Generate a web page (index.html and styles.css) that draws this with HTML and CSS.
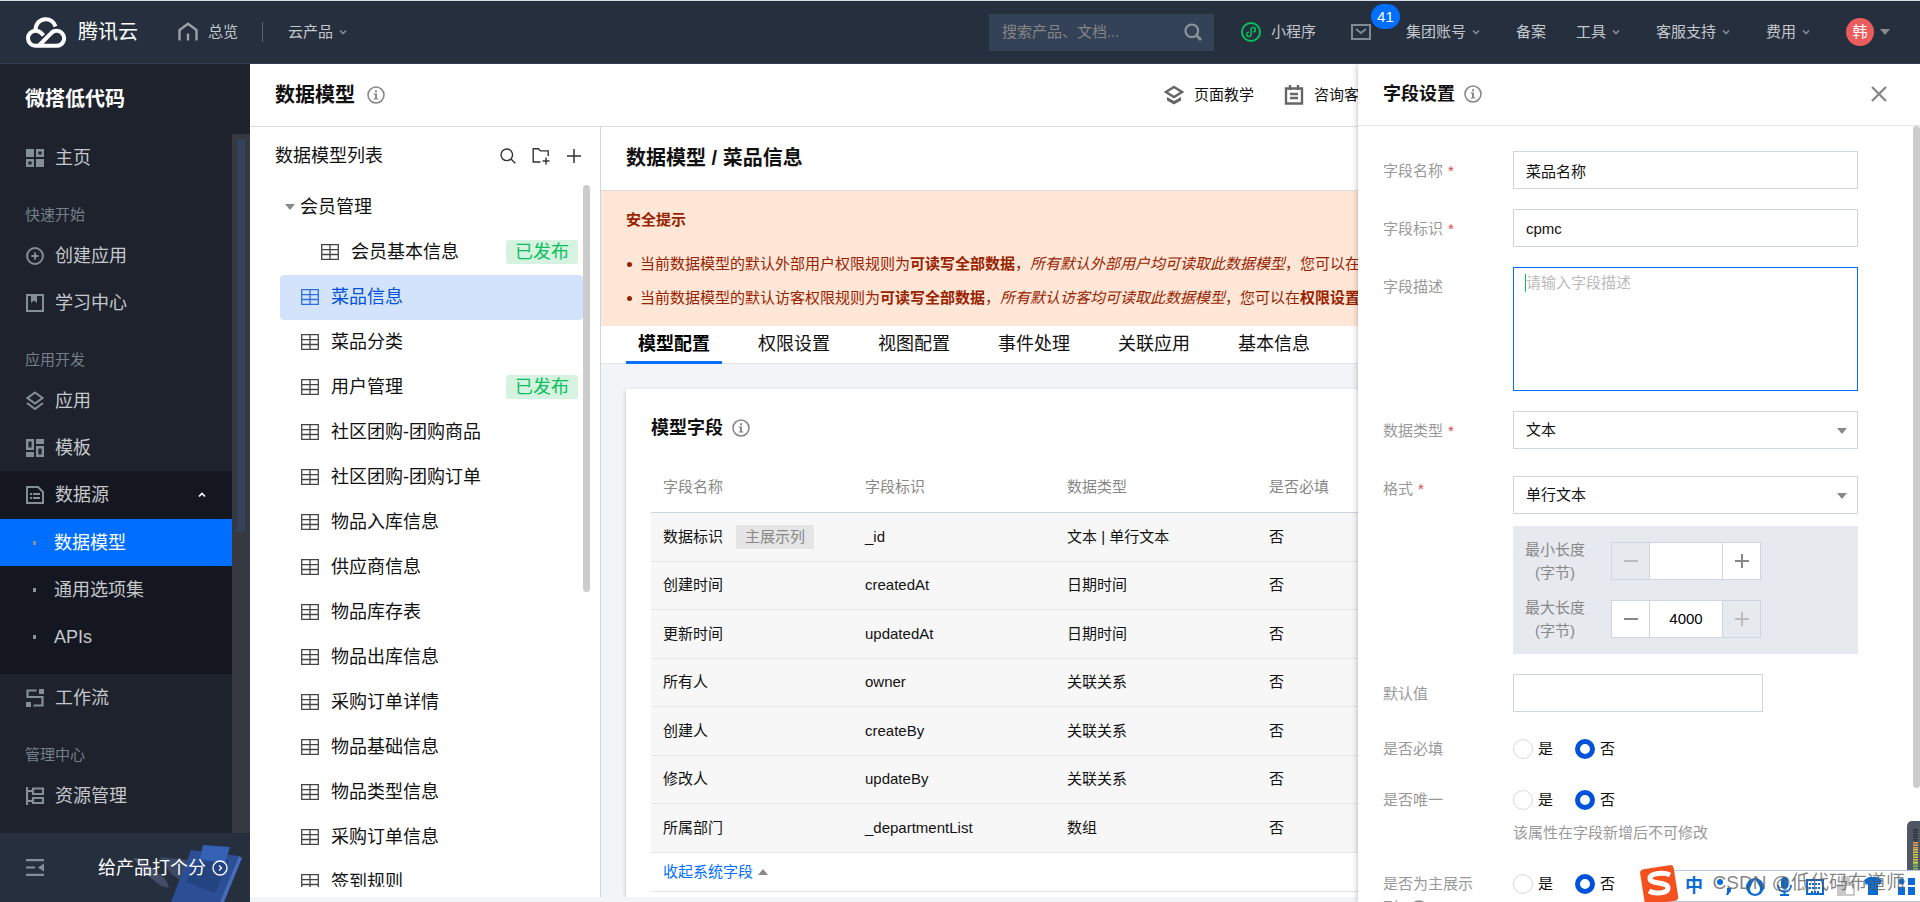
FILE: index.html
```html
<!DOCTYPE html>
<html lang="zh-CN">
<head>
<meta charset="utf-8">
<title>数据模型 - 微搭低代码</title>
<link rel="stylesheet" href="styles.css">
</head>
<body>
<svg class="sprite" aria-hidden="true">
  <symbol id="i-info" viewBox="0 0 18 18"><circle cx="9" cy="9" r="8" fill="none" stroke="currentColor" stroke-width="1.6"/><path d="M8 4.3h2v2H8zM6.8 7.6H10v4.8h1.4v1.2H6.6v-1.2H8V8.8H6.8z" fill="currentColor"/></symbol>
  <symbol id="i-chev" viewBox="0 0 10 10"><path d="M2 3.5 5 6.500 8 3.500" fill="none" stroke="currentColor" stroke-width="1.700"/></symbol>
  <symbol id="i-tri" viewBox="0 0 10 10"><path d="M0 2h10L5 8z" fill="currentColor"/></symbol>
  <symbol id="i-grid" viewBox="0 0 18 16"><path d="M.7.7h16.600v14.600H.7zM9 .7v14.600M.7 5.600h16.600M.7 10.500h16.600" fill="none" stroke="currentColor" stroke-width="1.300"/></symbol>
  <symbol id="i-home" viewBox="0 0 20 20"><path d="M1.500 18.500V8L10 1.800 18.500 8v10.500M10 11.500v7" fill="none" stroke="currentColor" stroke-width="2.400"/></symbol>
  <symbol id="i-search" viewBox="0 0 18 18"><circle cx="7.800" cy="7.800" r="6.300" fill="none" stroke="currentColor" stroke-width="2.200"/><path d="m12.500 12.500 4.500 4.500" stroke="currentColor" stroke-width="3"/></symbol>
  <symbol id="i-find" viewBox="0 0 16 16"><circle cx="6.800" cy="6.800" r="5.800" fill="none" stroke="currentColor" stroke-width="1.400"/><path d="m11 11 4.300 4.300" stroke="currentColor" stroke-width="1.400"/></symbol>
  <symbol id="i-folder" viewBox="0 0 18 18"><path d="M8.500 15H1.200V1.700h5.300l2 2.200h7.700v5M14 10.500v7M10.500 14h7" fill="none" stroke="currentColor" stroke-width="1.400"/></symbol>
  <symbol id="i-plus" viewBox="0 0 16 16"><path d="M8 1v14M1 8h14" stroke="currentColor" stroke-width="1.500"/></symbol>
  <symbol id="i-layers" viewBox="0 0 18 20"><path d="M9 1.500 16.500 7 9 12.500 1.500 7z" fill="none" stroke="currentColor" stroke-width="2"/><path d="m1 12 8 6 8-6" fill="none" stroke="currentColor" stroke-width="2"/></symbol>
  <symbol id="i-teach" viewBox="0 0 20 20"><path d="M10 2 18 7 10 12 2 7z" fill="none" stroke="currentColor" stroke-width="2.400"/><path d="m3 12 7 4 7-4v3.500l-7 4-7-4z" fill="currentColor"/></symbol>
  <symbol id="i-note" viewBox="0 0 20 20"><path d="M2 3.500h16v15H2zM6 0v5M14 0v5M6 9h8M6 13h8" fill="none" stroke="currentColor" stroke-width="2.400"/></symbol>
</svg>

<header class="topbar">
  <a class="brand" href="#">
    <svg width="42" height="31" viewBox="0 0 42 31" fill="none" stroke="#fff" stroke-width="4"><path d="M18.500 18.500C16.500 16 14 13.800 10.500 13.800a7.500 7.500 0 0 0 0 15H32a7.500 7.500 0 1 0-6-12.500L14.500 28"/><path d="M10.500 13.500C10.500 7 14.500 2.200 20.500 2.200c5 0 8.500 2.800 10 7.300"/></svg>
    <span>腾讯云</span>
  </a>
  <a class="nav-link overview" href="#"><svg class="dim" width="20" height="20"><use href="#i-home"/></svg>总览</a>
  <span class="divider"></span>
  <a class="nav-link products" href="#">云产品<svg class="chev" width="10" height="10"><use href="#i-chev"/></svg></a>
  <div class="top-right">
    <div class="search">
      <input type="text" placeholder="搜索产品、文档..." aria-label="搜索产品、文档">
      <button type="button" aria-label="搜索"><svg width="18" height="18"><use href="#i-search"/></svg></button>
    </div>
    <a class="nav-link mini" href="#"><svg width="20" height="20" viewBox="0 0 20 20" fill="none" stroke="#0abf5b"><circle cx="10" cy="10" r="9" stroke-width="2"/><path d="M7.800 10.200a2.200 2.200 0 1 0 2.200 2.300V7.500a2.200 2.200 0 1 1 2.200 2.300" stroke-width="1.500"/></svg>小程序</a>
    <a class="mail" href="#" aria-label="消息"><svg width="20" height="16" viewBox="0 0 20 16" fill="none" stroke="#7f8a92" stroke-width="2"><path d="M1 1h18v14H1zM5 5l5 4 5-4"/></svg><span class="badge">41</span></a>
    <a class="nav-link" href="#">集团账号<svg class="chev" width="10" height="10"><use href="#i-chev"/></svg></a>
    <a class="nav-link plain" href="#">备案</a>
    <a class="nav-link" href="#">工具<svg class="chev" width="10" height="10"><use href="#i-chev"/></svg></a>
    <a class="nav-link" href="#">客服支持<svg class="chev" width="10" height="10"><use href="#i-chev"/></svg></a>
    <a class="nav-link" href="#">费用<svg class="chev" width="10" height="10"><use href="#i-chev"/></svg></a>
    <button class="user" type="button"><span class="avatar">韩</span><svg width="10" height="10"><use href="#i-tri"/></svg></button>
  </div>
</header>

<div class="body">
  <aside class="sidebar">
    <h2 class="side-title">微搭低代码</h2>
    <div class="side-scroll">
      <nav class="side-nav">
        <a class="side-item" href="#"><svg width="18" height="18" viewBox="0 0 18 18" fill="currentColor"><path d="M0 0h8v8H0zM10 10h8v8h-8z"/><path d="M11.200 1.200h5.600v5.600h-5.600zM1.200 11.200h5.600v5.600H1.200z" fill="none" stroke="currentColor" stroke-width="2.400"/></svg>主页</a>
        <div class="side-head">快速开始</div>
        <a class="side-item" href="#"><svg width="20" height="20" viewBox="0 0 20 20" fill="none" stroke="currentColor" stroke-width="2.200"><circle cx="10" cy="10" r="8.800"/><path d="M10 6v8M6 10h8"/></svg>创建应用</a>
        <a class="side-item" href="#"><svg width="18" height="18" viewBox="0 0 18 18"><path d="M1 1h16v16H1z" fill="none" stroke="currentColor" stroke-width="2"/><path d="M5 2h6v7L8 6.500 5 9z" fill="currentColor"/></svg>学习中心</a>
        <div class="side-head">应用开发</div>
        <a class="side-item" href="#"><svg width="18" height="20"><use href="#i-layers"/></svg>应用</a>
        <a class="side-item" href="#"><svg width="18" height="18" viewBox="0 0 18 18" fill="currentColor"><path d="M10 0h8v5h-8zM0 13h8v5H0z"/><path d="M1.200 1.200h5.600v8.600H1.200zM11.200 8.200h5.600v8.600h-5.600z" fill="none" stroke="currentColor" stroke-width="2.400"/></svg>模板</a>
        <div class="side-group">
          <a class="side-item group-head" href="#"><svg width="18" height="18" viewBox="0 0 18 18"><path d="M1 1h11l5 5v11H1z" fill="none" stroke="currentColor" stroke-width="2"/><path d="M4 7h2v2H4zM7 7h7v2H7zM4 11h2v2H4zM7 11h7v2H7z" fill="currentColor"/></svg>数据源<svg class="up" width="10" height="10"><use href="#i-chev"/></svg></a>
          <a class="sub-item active" href="#">数据模型</a>
          <a class="sub-item" href="#">通用选项集</a>
          <a class="sub-item" href="#">APIs</a>
        </div>
        <a class="side-item" href="#"><svg width="18" height="18" viewBox="0 0 18 18" fill="currentColor"><path d="M13 0h5v5h-5zM0 13h5v5H0z"/><path d="M10.500 1.500h-9v6.500H16.500v8.500h-9" fill="none" stroke="currentColor" stroke-width="2.200"/></svg>工作流</a>
        <div class="side-head">管理中心</div>
        <a class="side-item" href="#"><svg width="18" height="18" viewBox="0 0 18 18" fill="none" stroke="currentColor" stroke-width="2.200"><path d="M1 0v18M1 4h6M1 14h6M7 1.500h10v5.500H7zM7 11h10v5H7z"/></svg>资源管理</a>
        <a class="side-item" href="#" aria-label="更多"><svg width="20" height="18" viewBox="0 0 20 18" fill="none" stroke="currentColor" stroke-width="2"><path d="M0 1h20M1 1v16h18V1"/></svg></a>
      </nav>
      <div class="side-track"><div class="side-thumb"></div></div>
    </div>
    <div class="side-foot">
      <svg class="board" width="110" height="58" viewBox="0 0 110 58"><path d="M0 14h6l12 9 15 13 3 8-8-2-14-11z" fill="#434e66"/><path d="m27 13 28 3-8 20-9-6z" fill="#3b4967"/><path d="M58 6 106 12 88 58H38z" fill="#2b4e94"/><path d="m106 12 3 2-18 44h-4z" fill="#446dba"/><path d="M60 20 96 15 82 49 54 38z" fill="#234381"/><path d="m70 1 27 2-5 16-25-4z" fill="#3561b4"/></svg>
      <button type="button" aria-label="收起菜单"><svg width="18" height="17" viewBox="0 0 18 17" fill="currentColor"><path d="M0 0h18v2.200H0zM0 7.400h9v2.200H0zM0 14.800h18V17H0zM18 4.500v8l-6-4z"/></svg></button>
      <a class="rate" href="#">给产品打个分<svg width="16" height="16" viewBox="0 0 16 16" fill="none" stroke="#fff" stroke-width="1.300"><circle cx="8" cy="8" r="7"/><path d="m7 5.500 2.500 2.500L7 10.500"/></svg></a>
    </div>
  </aside>

  <main class="main">
    <div class="page-head">
      <h1>数据模型</h1>
      <svg class="info" width="18" height="18"><use href="#i-info"/></svg>
      <div class="page-links">
        <a href="#"><svg width="20" height="20"><use href="#i-teach"/></svg>页面教学</a>
        <a href="#"><svg width="20" height="20"><use href="#i-note"/></svg>咨询客服</a>
      </div>
    </div>
    <div class="columns">
      <section class="models">
        <div class="models-head">
          <h3>数据模型列表</h3>
          <button type="button" aria-label="搜索"><svg width="16" height="16"><use href="#i-find"/></svg></button>
          <button type="button" aria-label="新建文件夹"><svg width="18" height="18"><use href="#i-folder"/></svg></button>
          <button type="button" aria-label="新建"><svg width="16" height="16"><use href="#i-plus"/></svg></button>
        </div>
        <div class="tree-wrap">
          <ul class="tree">
            <li class="folder"><svg class="tri" width="10" height="10"><use href="#i-tri"/></svg>会员管理</li>
            <li class="child"><svg width="18" height="16"><use href="#i-grid"/></svg>会员基本信息<span class="tag">已发布</span></li>
            <li class="selected"><svg width="18" height="16"><use href="#i-grid"/></svg>菜品信息</li>
            <li><svg width="18" height="16"><use href="#i-grid"/></svg>菜品分类</li>
            <li><svg width="18" height="16"><use href="#i-grid"/></svg>用户管理<span class="tag">已发布</span></li>
            <li><svg width="18" height="16"><use href="#i-grid"/></svg>社区团购-团购商品</li>
            <li><svg width="18" height="16"><use href="#i-grid"/></svg>社区团购-团购订单</li>
            <li><svg width="18" height="16"><use href="#i-grid"/></svg>物品入库信息</li>
            <li><svg width="18" height="16"><use href="#i-grid"/></svg>供应商信息</li>
            <li><svg width="18" height="16"><use href="#i-grid"/></svg>物品库存表</li>
            <li><svg width="18" height="16"><use href="#i-grid"/></svg>物品出库信息</li>
            <li><svg width="18" height="16"><use href="#i-grid"/></svg>采购订单详情</li>
            <li><svg width="18" height="16"><use href="#i-grid"/></svg>物品基础信息</li>
            <li><svg width="18" height="16"><use href="#i-grid"/></svg>物品类型信息</li>
            <li><svg width="18" height="16"><use href="#i-grid"/></svg>采购订单信息</li>
            <li><svg width="18" height="16"><use href="#i-grid"/></svg>签到规则</li>
          </ul>
          <div class="tree-thumb"></div>
        </div>
      </section>

      <section class="detail">
        <h2 class="crumb">数据模型 / 菜品信息</h2>
        <div class="alert">
          <strong>安全提示</strong>
          <ul>
            <li>当前数据模型的默认外部用户权限规则为<b>可读写全部数据</b>，<i>所有默认外部用户均可读取此数据模型</i>，您可以在</li>
            <li>当前数据模型的默认访客权限规则为<b>可读写全部数据</b>，<i>所有默认访客均可读取此数据模型</i>，您可以在<b>权限设置</b></li>
          </ul>
        </div>
        <div class="tabs" role="tablist">
          <button type="button" role="tab" class="on">模型配置</button>
          <button type="button" role="tab">权限设置</button>
          <button type="button" role="tab">视图配置</button>
          <button type="button" role="tab">事件处理</button>
          <button type="button" role="tab">关联应用</button>
          <button type="button" role="tab">基本信息</button>
        </div>
        <div class="card">
          <div class="card-head"><h3>模型字段</h3><svg class="info" width="18" height="18"><use href="#i-info"/></svg></div>
          <table>
            <colgroup><col class="c"><col class="c"><col class="c"><col></colgroup>
            <thead><tr><th>字段名称</th><th>字段标识</th><th>数据类型</th><th>是否必填</th></tr></thead>
            <tbody>
              <tr><td>数据标识<span class="chip">主展示列</span></td><td>_id</td><td>文本 | 单行文本</td><td>否</td></tr>
              <tr><td>创建时间</td><td>createdAt</td><td>日期时间</td><td>否</td></tr>
              <tr><td>更新时间</td><td>updatedAt</td><td>日期时间</td><td>否</td></tr>
              <tr><td>所有人</td><td>owner</td><td>关联关系</td><td>否</td></tr>
              <tr><td>创建人</td><td>createBy</td><td>关联关系</td><td>否</td></tr>
              <tr><td>修改人</td><td>updateBy</td><td>关联关系</td><td>否</td></tr>
              <tr><td>所属部门</td><td>_departmentList</td><td>数组</td><td>否</td></tr>
            </tbody>
          </table>
          <div class="fold"><a href="#">收起系统字段<svg width="10" height="10"><use href="#i-tri"/></svg></a></div>
        </div>
      </section>
    </div>
  </main>

  <aside class="drawer">
    <div class="drawer-head">
      <h2>字段设置</h2>
      <svg class="info" width="18" height="18"><use href="#i-info"/></svg>
      <button type="button" aria-label="关闭"><svg width="16" height="16" viewBox="0 0 16 16" fill="none" stroke="currentColor" stroke-width="2.400"><path d="m1 1 14 14M15 1 1 15"/></svg></button>
    </div>
    <form class="form">
      <div class="row"><label for="f-name">字段名称<em>*</em></label><input id="f-name" class="field" type="text" value="菜品名称"></div>
      <div class="row"><label for="f-id">字段标识<em>*</em></label><input id="f-id" class="field" type="text" value="cpmc"></div>
      <div class="row"><label for="f-desc">字段描述</label><div class="area"><textarea id="f-desc" class="field" placeholder="请输入字段描述"></textarea><span class="caret"></span></div></div>
      <div class="row roomy"><label for="f-type">数据类型<em>*</em></label><div class="select"><select id="f-type" class="field"><option>文本</option></select><svg width="10" height="10"><use href="#i-tri"/></svg></div></div>
      <div class="row top"><label for="f-fmt">格式<em>*</em></label>
        <div class="stack">
          <div class="select"><select id="f-fmt" class="field"><option>单行文本</option></select><svg width="10" height="10"><use href="#i-tri"/></svg></div>
          <div class="limits">
            <div class="limit"><label for="f-min">最小长度<br>(字节)</label><div class="stepper"><button type="button" disabled aria-label="减少"><svg width="14" height="14" viewBox="0 0 14 14"><path d="M0 6h14v2H0z" fill="currentColor"/></svg></button><input id="f-min" type="text"><button type="button" aria-label="增加"><svg width="14" height="14" viewBox="0 0 14 14"><path d="M0 6h14v2H0zM6 0h2v14H6z" fill="currentColor"/></svg></button></div></div>
            <div class="limit"><label for="f-max">最大长度<br>(字节)</label><div class="stepper"><button type="button" aria-label="减少"><svg width="14" height="14" viewBox="0 0 14 14"><path d="M0 6h14v2H0z" fill="currentColor"/></svg></button><input id="f-max" type="text" value="4000"><button type="button" disabled aria-label="增加"><svg width="14" height="14" viewBox="0 0 14 14"><path d="M0 6h14v2H0zM6 0h2v14H6z" fill="currentColor"/></svg></button></div></div>
          </div>
        </div>
      </div>
      <div class="row"><label for="f-def">默认值</label><input id="f-def" class="field short" type="text"></div>
      <div class="row choice"><span class="lbl">是否必填</span><label><input type="radio" name="req">是</label><label><input type="radio" name="req" checked>否</label></div>
      <div class="row choice"><span class="lbl">是否唯一</span><label><input type="radio" name="uniq">是</label><label><input type="radio" name="uniq" checked>否</label></div>
      <p class="hint">该属性在字段新增后不可修改</p>
      <div class="row choice"><span class="lbl">是否为主展示<br>列<svg class="info" width="18" height="18"><use href="#i-info"/></svg></span><label><input type="radio" name="main">是</label><label><input type="radio" name="main" checked>否</label></div>
    </form>
    <div class="drawer-thumb"></div>
  </aside>
</div>

<svg class="meter" width="13" height="49" viewBox="0 0 13 49"><path d="M13 0H5a5 5 0 0 0-5 5v44h13z" fill="#525766"/><g stroke-width="5" stroke-dasharray="1.500 1"><path d="M8.500 8v14" stroke="#2e323d"/><path d="M8.500 21v7" stroke="#e6a24c"/><path d="M8.500 28v14" stroke="#d9c948"/><path d="M8.500 42v7" stroke="#7fc45c"/></g></svg>
<div class="ime">
  <span class="cn">中</span>
  <svg width="222" height="20" viewBox="0 0 222 20" fill="#0a6bd6"><circle cx="25" cy="6" r="3"/><path d="M32 12h4v3l-3 4h-2l1-3z"/><circle cx="60" cy="11" r="9"/><path d="M60 3c4 6 5 8 5 10a5 5 0 0 1-10 0c0-2 1-4 5-10z" fill="#fff"/><rect x="86" y="1" width="7" height="12" rx="3.500"/><path d="M83 9c0 9 13 9 13 0M89.500 15v5M85 19h9" fill="none" stroke="#0a6bd6" stroke-width="2"/><path d="M112 4h16v14h-16z" fill="none" stroke="#0a6bd6" stroke-width="2"/><path d="M114 8h12M114 12h12M116 16h8" stroke="#0a6bd6" stroke-width="2" stroke-dasharray="2 1"/><path d="M142 8h18v12h-18zM146 0h9v8h-9z" fill="#c9c9c9"/><path d="M151 10h7v8h-7z" fill="#fff"/><path d="m169 4 5-3h8l5 3-2 5-2-1v11h-10V8l-2 1z"/><path d="M203 11h7v8h-7zM213 11h7v8h-7zM213 2h7v7h-7z"/><circle cx="206.500" cy="5.500" r="3"/></svg>
</div>
<svg class="sogou" width="40" height="40" viewBox="0 0 40 40"><rect x="3" y="3" width="34" height="36" rx="4" fill="#f4511e" transform="rotate(-9 20 20)"/><path d="M31 11c-6-3-20-2-20 3.500 0 6 18 3 18 9.500 0 6-14 6-19 3" fill="none" stroke="#fff" stroke-width="5"/></svg>
<div class="watermark">CSDN @低代码布道师</div>
</body>
</html>
```
FILE: styles.css
```css
* { box-sizing: border-box; }
html, body { height: 100%; }
body {
  margin: 0;
  display: flex;
  flex-direction: column;
  overflow: hidden;
  position: relative;
  font: 15px/24px "Liberation Sans", "Noto Sans CJK SC", sans-serif;
  color: #111;
  background: #f3f4f7;
}
h1, h2, h3, p, ul { margin: 0; padding: 0; }
ul { list-style: none; }
a { color: inherit; text-decoration: none; }
button, input, select, textarea { font: inherit; color: inherit; margin: 0; }
button { background: none; border: 0; padding: 0; display: flex; align-items: center; justify-content: center; }
svg { flex: none; display: block; }
.sprite { position: absolute; width: 0; height: 0; }
.info { color: #888; }

/* Top bar */
.topbar {
  flex: none;
  height: 64px;
  display: flex;
  align-items: center;
  padding: 0 30px 0 25px;
  background: #262f3e;
  border-top: 1px solid #d5dce0;
  border-bottom: 1px solid #333f56;
  color: #c4c8cc;
}
.brand { display: flex; align-items: center; gap: 11px; color: #fff; font-size: 20px; }
.nav-link { display: flex; align-items: center; gap: 5px; white-space: nowrap; }
.overview { margin-left: 40px; gap: 10px; }
.dim { color: #9aa2a8; }
.chev { color: #7f8a92; }
.divider { width: 1px; height: 20px; margin: 0 25px 0 24px; background: #5b646f; }
.top-right { margin-left: auto; display: flex; align-items: center; gap: 35px; }
.search { display: flex; align-items: center; width: 225px; height: 37px; padding: 0 12px 0 13px; margin-right: -8px; background: #344258; }
.search input { flex: 1; min-width: 0; padding: 0; border: 0; outline: 0; background: none; }
.search input::placeholder { color: #858585; opacity: 1; }
.search button { color: #8a949b; }
.mini { gap: 10px; }
.plain { margin-right: -5px; }
.mail { position: relative; }
.badge { position: absolute; left: 20px; top: -20px; width: 29px; height: 25px; border-radius: 13px; background: #006eff; color: #fff; text-align: center; line-height: 25px; }
.user { gap: 6px; color: #8a8a8a; }
.avatar { width: 28px; height: 28px; border-radius: 50%; background: #eb5c5c; color: #fff; line-height: 27px; text-align: center; }

.body { flex: 1; min-height: 0; display: flex; position: relative; }

/* Sidebar */
.sidebar { flex: none; width: 250px; display: flex; flex-direction: column; background: #1e222d; color: #c5c8cc; }
.side-title { flex: none; height: 70px; padding-left: 25px; color: #fff; font-size: 20px; line-height: 70px; }
.side-scroll { flex: 1; min-height: 0; display: flex; overflow: hidden; }
.side-nav { flex: 1; font-size: 18px; }
.side-item { display: flex; align-items: center; height: 47px; padding-left: 26px; }
.side-item svg { color: #858f97; width: 18px; margin-right: 11px; }
.side-head { height: 51px; padding: 17px 0 0 25px; color: #75808a; font-size: 15px; line-height: 34px; }
.side-group { padding-bottom: 14px; background: #151720; }
.group-head { height: 48px; }
.side-item .up { width: 10px; margin: 0 25px 0 auto; color: #fff; transform: rotate(180deg); }
.sub-item { display: flex; align-items: center; height: 47px; padding-left: 33px; }
.sub-item::before { content: ""; width: 3px; height: 4px; margin-right: 18px; background: #8a9299; }
.sub-item.active { background: #006eff; color: #fff; }
.side-track { flex: none; width: 18px; padding: 5px; background: #363942; }
.side-thumb { height: 57%; background: #34425a; }
.side-foot { flex: none; position: relative; display: flex; align-items: center; height: 69px; padding: 0 22px 0 26px; background: #262f3e; overflow: hidden; }
.side-foot button { color: #858f97; }
.board { position: absolute; right: 7px; bottom: 0; }
.rate { position: relative; display: flex; align-items: center; gap: 6px; margin-left: auto; color: #fff; font-size: 18px; }

/* Main column */
.main { flex: 1; min-width: 0; display: flex; flex-direction: column; padding-bottom: 5px; }
.page-head { flex: none; height: 63px; display: flex; align-items: center; padding: 0 25px; background: #fff; border-bottom: 1px solid #dcdcdc; }
.page-head h1 { margin-right: 12px; font-size: 20px; }
.page-links { display: flex; gap: 30px; margin-left: 779px; }
.page-links a { display: flex; align-items: center; gap: 10px; white-space: nowrap; }
.page-links svg { color: #666; }
.columns { flex: 1; min-height: 0; display: flex; }

/* Model tree */
.models { flex: none; width: 351px; display: flex; flex-direction: column; padding-bottom: 10px; background: #fff; border-right: 1px solid #cfd5de; font-size: 18px; }
.models-head { flex: none; display: flex; align-items: center; gap: 16px; height: 58px; padding: 0 18px 0 25px; color: #333; }
.models-head h3 { flex: 1; color: #111; font-size: 18px; font-weight: 400; }
.tree-wrap { flex: 1; min-height: 0; position: relative; overflow: hidden; }
.tree { margin: 0 17px 0 30px; }
.tree li { display: flex; align-items: center; height: 45px; padding: 0 5px 1px 21px; border-radius: 4px; }
.tree svg { margin-right: 12px; color: #444; }
.tree .folder { padding-left: 5px; }
.tree .folder svg { margin-right: 5px; color: #888; }
.tree .child { padding-left: 41px; }
.tree .selected { background: #d4e3fc; color: #0052d9; }
.tree .selected svg { color: #2b6fe0; }
.tag { width: 72px; margin-left: auto; border-radius: 3px; background: #d6f3e2; color: #0abf5b; text-align: center; }
.tree-thumb { position: absolute; top: 0; right: 10px; width: 7px; height: 58%; border-radius: 4px; background: #ccc; }

/* Model detail */
.detail { flex: 1; min-width: 0; display: flex; flex-direction: column; overflow: hidden; }
.crumb { flex: none; height: 64px; padding-left: 25px; background: #fff; border-bottom: 1px solid #dcdcdc; font-size: 20px; line-height: 63px; }
.alert { flex: none; padding: 17px 25px 11px; background: #fee7d7; color: #992200; }
.alert ul { margin-top: 15px; }
.alert li { position: relative; padding-left: 14px; line-height: 34px; white-space: nowrap; }
.alert li::before { content: ""; position: absolute; left: 1px; top: 15px; width: 5px; height: 5px; border-radius: 50%; background: #992200; }
.tabs { flex: none; display: flex; gap: 24px; height: 38px; padding-left: 25px; background: #fff; border-bottom: 1px solid #e3e5ea; font-size: 18px; }
.tabs button { height: 38px; padding: 0 12px; border-bottom: 3px solid transparent; white-space: nowrap; }
.tabs .on { border-color: #006eff; color: #000; font-weight: 700; }
.card { flex: 1; margin: 25px 25px 0; padding: 0 25px; background: #fff; box-shadow: 0 2px 4px rgba(54, 58, 80, .3); }
.card-head { display: flex; align-items: center; gap: 9px; height: 78px; }
.card-head h3 { font-size: 18px; }
table { width: 100%; table-layout: fixed; border-collapse: collapse; }
.c { width: 202px; }
th { height: 45px; padding: 0 12px 4px; border-bottom: 1px solid #cfd5de; color: #888; font-weight: 400; text-align: left; }
td { height: 49px; padding: 0 12px; border-bottom: 1px solid #e3e6eb; background: #f7f7f7; }
tr:nth-child(even) td { height: 48px; }
.chip { display: inline-block; margin-left: 13px; padding: 0 9px; background: #e5e5e5; color: #888; }
.fold { display: flex; height: 39px; padding-left: 12px; border-bottom: 1px solid #dfe2e7; color: #006eff; }
.fold a { display: flex; align-items: center; gap: 5px; }
.fold svg { color: #888; transform: rotate(180deg); }

/* Field drawer */
.drawer { position: absolute; top: 0; right: 0; bottom: 0; width: 562px; display: flex; flex-direction: column; overflow: hidden; background: #fff; box-shadow: 0 0 6px rgba(0, 0, 0, .3); clip-path: inset(0 0 0 -8px); }
.drawer-head { flex: none; display: flex; align-items: center; height: 62px; padding: 0 33px 2px 25px; border-bottom: 1px solid #e5e5e5; }
.drawer-head h2 { margin-right: 9px; font-size: 18px; }
.drawer-head button { margin-left: auto; color: #888; }
.form { flex: 1; min-height: 0; padding: 25px 62px 0 25px; overflow: hidden; }
.row { display: flex; margin-bottom: 20px; }
.row > label:first-child, .lbl { flex: none; width: 130px; padding-top: 8px; color: #999; }
.row em { margin-left: 5px; color: #e54545; font-style: normal; }
.field { flex: 1; display: block; min-width: 0; width: 100%; height: 38px; padding: 0 12px; border: 1px solid #cfd5de; border-radius: 0; outline: 0; background: #fff; appearance: none; }
.area { flex: 1; position: relative; }
textarea.field { height: 124px; padding: 3px 12px; border-color: #006eff; resize: none; }
textarea::placeholder { color: #bbb; opacity: 1; }
.caret { position: absolute; left: 12px; top: 7px; width: 1px; height: 18px; background: #0abf5b; }
.roomy { margin-bottom: 27px; }
.row.top > label:first-child { padding-top: 1px; }
.stack { flex: 1; }
.select { flex: 1; position: relative; }
.select svg { position: absolute; right: 11px; top: 15px; color: #888; pointer-events: none; }
.limits { display: grid; gap: 12px; margin-top: 12px; padding: 12px; background: #e6e9ee; }
.limit { display: flex; align-items: center; gap: 26px; color: #888; }
.limit label { width: 60px; line-height: 23px; text-align: center; }
.stepper { display: flex; width: 150px; height: 38px; border: 1px solid #cfd5de; background: #fff; }
.stepper button { width: 37px; color: #888; }
.stepper button:disabled { background: #e6e9ee; color: #bbb; }
.stepper input { flex: 1; min-width: 0; padding: 0; border: solid #cfd5de; border-width: 0 1px; outline: 0; background: #fff; color: #000; text-align: center; }
.field.short { flex: none; width: 250px; }
.choice { height: 31px; align-items: flex-start; }
.choice .lbl { padding-top: 5px; }
.choice label { display: flex; align-items: center; gap: 5px; margin: 5px 22px 0 0; }
.choice input { flex: none; width: 20px; height: 20px; border: 1px solid #d3d9e3; border-radius: 50%; background: #fff; appearance: none; }
.choice input:checked { border: 5px solid #0052d9; }
.choice .info { display: inline-block; margin-left: 12px; vertical-align: middle; }
.hint { margin: -13px 0 22px 130px; color: #999; }
.drawer-thumb { position: absolute; top: 62px; right: 0; width: 7px; height: 79%; border-radius: 4px; background: #ccc; }

/* Desktop overlays */
.meter { position: absolute; right: 0; bottom: 32px; }
.ime { position: absolute; right: 0; bottom: 0; display: flex; align-items: center; width: 262px; height: 32px; padding-left: 26px; border: 1px solid #b9c8e0; border-right: 0; background: #fff; overflow: hidden; }
.ime .cn { color: #0a6bd6; font-size: 18px; font-weight: 700; }
.ime svg { margin-left: -8px; }
.sogou { position: absolute; right: 241px; bottom: -2px; }
.watermark { position: absolute; right: 15px; bottom: 7px; color: rgba(90, 90, 90, .75); font-size: 19px; }
```
